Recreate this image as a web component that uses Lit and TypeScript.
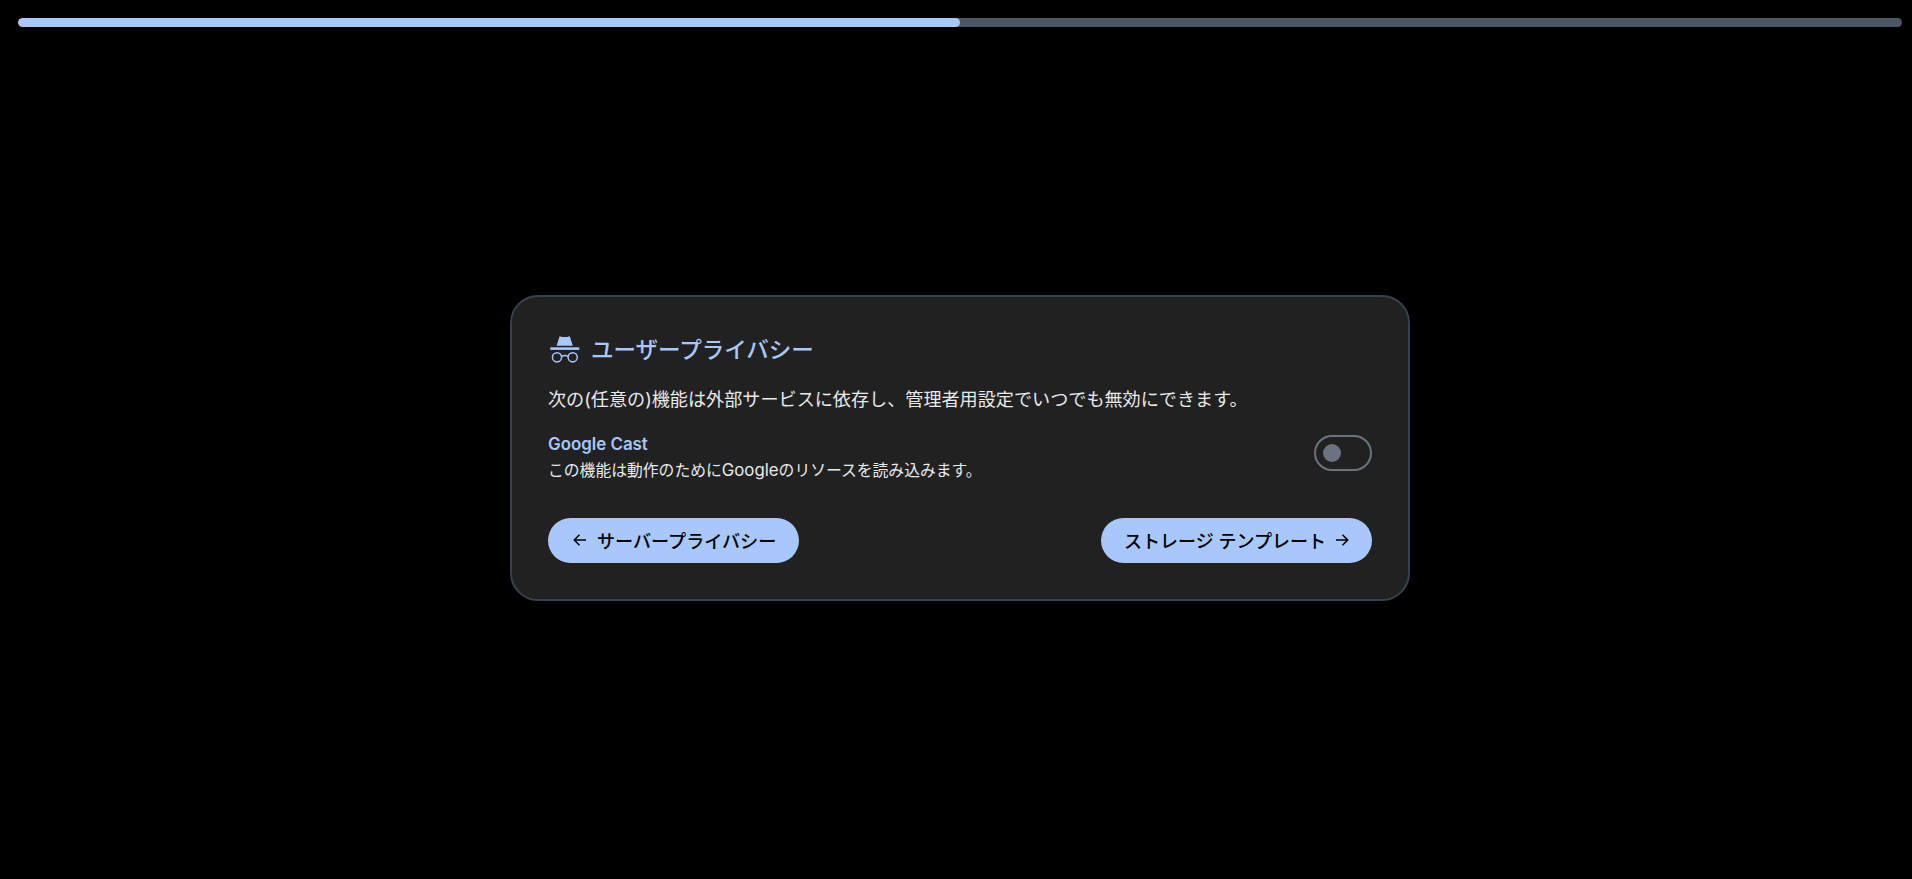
import { LitElement, html, css } from "lit";
import { customElement } from "lit/decorators.js";

@customElement("app-root")
export class AppRoot extends LitElement {
  static styles = css`
    :host {
      display: flex;
      flex-direction: column;
      box-sizing: border-box;
      height: 100vh;
      padding: 18px 10px 0 18px;
      background: #000;
      font-family: "Inter", "Noto Sans CJK JP", sans-serif;
      color: #e8eaed;
    }
    .track { height: 9px; border-radius: 5px; background: #4b5563; overflow: hidden; flex: none; }
    .fill { height: 100%; width: 50%; border-radius: 5px; background: #a8c7fa; }
    main { flex: 1; display: flex; align-items: center; justify-content: center; padding-bottom: 10px; }
    .card {
      box-sizing: border-box;
      width: 900px;
      height: 306px;
      padding: 36px;
      background: #212121;
      border: 2px solid #374151;
      border-radius: 28px;
      display: flex;
      flex-direction: column;
    }
    .title { display: flex; align-items: center; gap: 9px; color: #a8c7fa; font-size: 22.5px; font-weight: 500; line-height: 34px; }
    .title svg { width: 34px; height: 34px; flex: none; }
    .desc { margin-top: 18px; font-size: 18.12px; line-height: 28px; }
    .row { margin-top: 19px; display: flex; align-items: flex-start; justify-content: space-between; }
    .name { color: #a8c7fa; font-size: 16.9px; font-weight: 600; line-height: 24px; }
    .sub { margin-top: 3px; font-size: 15.8px; line-height: 22px; }
    .latin { font-size: 16.8px; }
    .toggle { box-sizing: border-box; margin-top: 3px; width: 58px; height: 36px; border: 2px solid #6b7280; border-radius: 18px; display: flex; align-items: center; padding-left: 7px; }
    .knob { width: 18px; height: 18px; border-radius: 50%; background: #6b7280; }
    .actions { margin-top: auto; display: flex; justify-content: space-between; }
    .btn { display: flex; align-items: center; gap: 8px; height: 45px; padding: 0 23px 1px 25px; border-radius: 23px; background: #a8c7fa; color: #000; font-size: 18.1px; font-weight: 500; border: none; font-family: inherit; }
    .next { gap: 7px; padding: 0 23px 1px; font-size: 18px; }
    .btn svg { width: 16px; height: 16px; flex: none; }
  `;

  render() {
    return html`
      <div class="track"><div class="fill"></div></div>
      <main>
        <section class="card">
          <div class="title">
            <svg viewBox="0 0 34 34">
              <path fill="#a8c7fa" d="M11.6 3.2c1.7.5 3.4.9 5.1.9s3.4-.4 5.1-.9l3 9.6H8.6z"/>
              <rect fill="#a8c7fa" x="2.3" y="14.3" width="29" height="2.6"/>
              <g fill="none" stroke="#a8c7fa" stroke-width="1.5">
                <circle cx="9" cy="24.3" r="4.6"/>
                <circle cx="24.7" cy="24.3" r="4.6"/>
                <path d="M13.4 23.4q3.4-2 6.8 0"/>
              </g>
            </svg>
            ユーザープライバシー
          </div>
          <div class="desc">次の(任意の)機能は外部サービスに依存し、管理者用設定でいつでも無効にできます。</div>
          <div class="row">
            <div>
              <div class="name">Google Cast</div>
              <div class="sub">この機能は動作のために<span class="latin">Google</span>のリソースを読み込みます。</div>
            </div>
            <div class="toggle"><div class="knob"></div></div>
          </div>
          <div class="actions">
            <button class="btn"><svg viewBox="0 0 16 16" fill="none" stroke="#000" stroke-width="1.5"><path d="M13 8H1.5M6.5 2.8 1.3 8l5.2 5.2"/></svg>サーバープライバシー</button>
            <button class="btn next">ストレージ テンプレート<svg viewBox="0 0 16 16" fill="none" stroke="#000" stroke-width="1.5"><path d="M3 8h11.5M9.5 2.8 14.7 8l-5.2 5.2"/></svg></button>
          </div>
        </section>
      </main>
    `;
  }
}
